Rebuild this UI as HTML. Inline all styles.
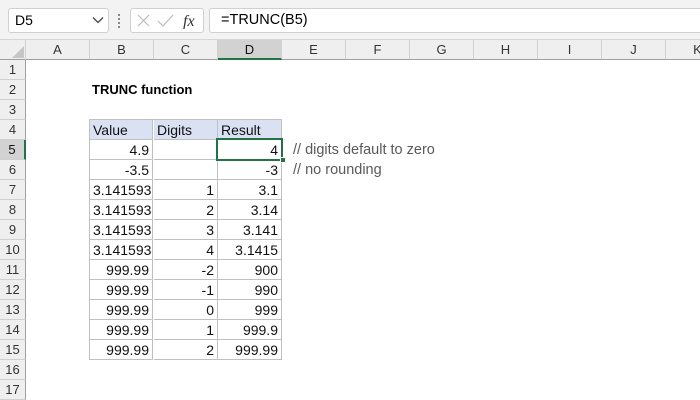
<!DOCTYPE html>
<html><head><style>
body{margin:0;width:700px;height:400px;overflow:hidden;background:#fff;font-family:"Liberation Sans",Calibri,sans-serif;position:relative}
.a{position:absolute;box-sizing:border-box}
.ch{top:40px;height:20px;background:#efefef;border-right:1px solid #d0d0d0;border-bottom:1px solid #9f9f9f;font-size:13px;color:#333;text-align:center;line-height:19px}
.rh{left:0;width:26px;height:20px;background:#efefef;border-right:1px solid #9f9f9f;border-bottom:1px solid #d0d0d0;font-size:13px;color:#333;text-align:center;line-height:20px}
.c{height:20px;border-right:1px solid #c0c0c0;border-bottom:1px solid #c0c0c0;font-size:14px;line-height:20px;padding:0 3px;color:#111;white-space:nowrap}
</style></head><body>
<div class="a" style="left:0;top:0;width:700px;height:40px;background:#f3f3f3;border-bottom:1px solid #d6d6d6"></div>
<div class="a" style="left:8px;top:8px;width:101px;height:25px;background:#fff;border:1px solid #d0d0d0;border-radius:3px;font-size:14px;line-height:23px;padding-left:6px">D5</div>
<svg class="a" style="left:92px;top:16px" width="12" height="8"><path d="M1 1.5L6 6.5L11 1.5" stroke="#444" stroke-width="1.3" fill="none"/></svg>
<div class="a" style="left:118px;top:14px;width:2px;height:14px;border-left:2px dotted #888"></div>
<div class="a" style="left:130px;top:8px;width:74px;height:25px;background:#fff;border:1px solid #d0d0d0;border-radius:3px"></div>
<svg class="a" style="left:136px;top:13px" width="66" height="16"><path d="M2 2L13 13M13 2L2 13" stroke="#bbb" stroke-width="1.2"/><path d="M22 8L27 13L37 2" stroke="#bbb" stroke-width="1.2" fill="none"/><text x="47" y="13" font-family="Liberation Serif" font-style="italic" font-size="16" fill="#333">fx</text></svg>
<div class="a" style="left:209px;top:8px;width:495px;height:25px;background:#fff;border:1px solid #d0d0d0;border-radius:3px;font-size:14.5px;line-height:23px;padding-left:11px">=TRUNC(B5)</div>
<div class="a ch" style="left:0;width:26px"></div>
<svg class="a" style="left:12px;top:46px" width="12" height="12"><path d="M12 0L12 12L0 12Z" fill="#c6c6c6"/></svg>
<div id="g"></div>
<script>
var g=document.getElementById('g'),h='';
var cols='ABCDEFGHIJK'.split('');
cols.forEach(function(c,i){var l=26+i*64;h+='<div class="a ch" style="left:'+l+'px;width:64px;'+(c=='D'?'background:#d2d2d2;border-bottom:2px solid #217346;color:#111':'')+'">'+c+'</div>'});
for(var r=1;r<=17;r++){var t=60+(r-1)*20;h+='<div class="a rh" style="top:'+t+'px;'+(r==5?'background:#d2d2d2;border-right:2px solid #217346;color:#111':'')+'">'+r+'</div>'}
h+='<div class="a" style="left:92px;top:80px;height:20px;line-height:20px;font-size:13px;font-weight:bold">TRUNC function</div>';
var d=[['4.9','','4'],['-3.5','','-3'],['3.141593','1','3.1'],['3.141593','2','3.14'],['3.141593','3','3.141'],['3.141593','4','3.1415'],['999.99','-2','900'],['999.99','-1','990'],['999.99','0','999'],['999.99','1','999.9'],['999.99','2','999.99']];
h+='<div class="a" style="left:89px;top:119px;width:193px;height:241px;border-left:1px solid #c0c0c0;border-top:1px solid #c0c0c0"></div>';
['Value','Digits','Result'].forEach(function(s,i){h+='<div class="a c" style="left:'+(90+i*64)+'px;top:120px;width:'+(i==0?63:64)+'px;background:#d9e1f2">'+s+'</div>'});
d.forEach(function(row,j){var t=140+j*20;row.forEach(function(s,i){h+='<div class="a c" style="left:'+(90+i*64)+'px;top:'+t+'px;width:'+(i==0?63:64)+'px;text-align:right">'+s+'</div>'})});
h+='<div class="a" style="left:216px;top:138px;width:67px;height:23px;border:2px solid #217346"></div>';
h+='<div class="a" style="left:280px;top:157px;width:6px;height:6px;background:#217346;border:1px solid #fff"></div>';
h+='<div class="a" style="left:293px;top:140px;line-height:20px;font-size:14.5px;color:#595959">// digits default to zero</div>';
h+='<div class="a" style="left:293px;top:160px;line-height:20px;font-size:14.5px;color:#595959">// no rounding</div>';
g.innerHTML=h;
</script>
</body></html>
